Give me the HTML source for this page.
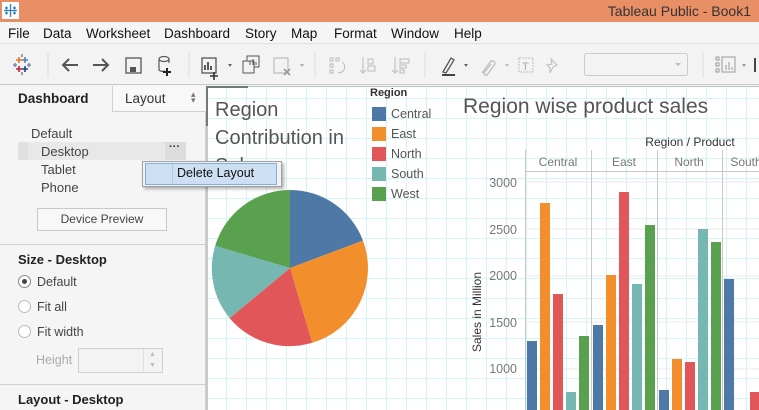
<!DOCTYPE html>
<html><head><meta charset="utf-8"><style>
*{margin:0;padding:0;box-sizing:border-box}
body{width:759px;height:410px;overflow:hidden;position:relative;font-family:"Liberation Sans",sans-serif;background:#f5f5f5;color:#333}
.a{position:absolute}
.t{position:absolute;white-space:nowrap}
</style></head><body>
<div class="a" style="left:0;top:0;width:759px;height:22px;background:#e98f66"></div>
<div class="a" style="left:2px;top:2px;width:17px;height:17px;background:#fff"></div>
<svg class="a" style="left:2px;top:2px" width="17" height="17" viewBox="0 0 17 17"><g stroke="#2e7fb8" stroke-width="1.3"><path d="M8.5 2v13M2 8.5h13M4.5 4.5v3M3 6h3M12.5 4.5v3M11 6h3M4.5 9.5v3M3 11h3M12.5 9.5v3M11 11h3"/></g></svg>
<div class="t" style="right:8px;top:3px;font-size:14px;color:#333">Tableau Public - Book1</div>
<div class="a" style="left:0;top:22px;width:759px;height:22px;background:#f5f5f5;border-bottom:1px solid #e0e0e0"></div>
<div class="t" style="top:26px;left:8px;font-size:13.5px;color:#111">File</div>
<div class="t" style="top:26px;left:43px;font-size:13.5px;color:#111">Data</div>
<div class="t" style="top:26px;left:86px;font-size:13.5px;color:#111">Worksheet</div>
<div class="t" style="top:26px;left:164px;font-size:13.5px;color:#111">Dashboard</div>
<div class="t" style="top:26px;left:245px;font-size:13.5px;color:#111">Story</div>
<div class="t" style="top:26px;left:291px;font-size:13.5px;color:#111">Map</div>
<div class="t" style="top:26px;left:334px;font-size:13.5px;color:#111">Format</div>
<div class="t" style="top:26px;left:391px;font-size:13.5px;color:#111">Window</div>
<div class="t" style="top:26px;left:454px;font-size:13.5px;color:#111">Help</div>
<div class="a" style="left:0;top:44px;width:759px;height:41px;background:#f3f3f3;border-bottom:1px solid #c8c8c8"></div>
<svg class="a" style="left:0;top:44px" width="759" height="41">
<g stroke-width="1.6">
<path d="M19 13v6M16 16h6" stroke="#e8762b"/><path d="M25 13v6M22 16h6" stroke="#5b87b0"/>
<path d="M19 22v6M16 25h6" stroke="#c72035"/><path d="M25 22v6M22 25h6" stroke="#1f447e"/>
<path d="M15 19v4M13 21h4M29 19v4M27 21h4M22 10v3M22 28v3" stroke="#7d8db0"/>
</g>
<g stroke="#ddd"><path d="M48 8v26M189 8v26M315 8v26M425 8v26M703 8v26"/></g>
<g stroke="#555" stroke-width="2" fill="none">
<path d="M78 21H63M69 15l-6 6 6 6"/><path d="M93 21h15M102 15l6 6-6 6"/>
</g>
<rect x="126" y="14" width="15" height="15" fill="none" stroke="#555" stroke-width="1.3"/><rect x="130" y="23" width="6" height="5" fill="#555"/>
<path d="M159 15v11a4 2 0 0 0 6 1M159 15a4 2 0 0 1 10 0v4M159 15a4 2 0 0 0 10 0" fill="none" stroke="#555" stroke-width="1.2"/>
<path d="M167 24v8M163 28h8" stroke="#222" stroke-width="2"/>
<rect x="202" y="14" width="14" height="15" fill="none" stroke="#555" stroke-width="1.3"/><path d="M205 26v-5M208 26v-8M211 26v-4M214 28v8M210 32h8" stroke="#333" stroke-width="1.6"/>
<path d="M228 20l2 3 2-3z" fill="#666"/>
<rect x="247" y="12" width="12" height="11" fill="none" stroke="#555"/><rect x="243" y="17" width="11" height="12" fill="#f3f3f3" stroke="#555"/><path d="M250 21v-4M253 21v-6M256 21v-3" stroke="#555"/>
<rect x="274" y="14" width="14" height="15" fill="none" stroke="#bbb" stroke-width="1.2"/><path d="M284 25l6 6M290 25l-6 6" stroke="#999" stroke-width="1.6"/><path d="M300 20l2 3 2-3z" fill="#aaa"/>
<g stroke="#bbb" fill="none"><rect x="330" y="14" width="3" height="3"/><rect x="336" y="14" width="3" height="3"/><rect x="330" y="20" width="3" height="3"/><rect x="330" y="26" width="3" height="3"/><path d="M342 18a6 6 0 0 1 0 10l-4 1"/>
<path d="M363 13v16M360 26l3 3 3-3M368 15h5v5h-5zM368 22h7v5h-7z"/>
<path d="M395 13v16M392 26l3 3 3-3M400 15h9v4h-9zM400 21h6v3h-6zM400 26h4v3h-4z"/></g>
<path d="M443 28l8-14 3 2-8 13z" fill="none" stroke="#555" stroke-width="1.3"/><rect x="442" y="30" width="13" height="2" fill="#444"/><path d="M464 20l2 3 2-3z" fill="#666"/>
<path d="M482 29l9-12a3 3 0 0 1 4 3l-8 11a2 2 0 0 1-3-2l7-9" fill="none" stroke="#bbb" stroke-width="1.2"/><path d="M505 20l2 3 2-3z" fill="#bbb"/>
<rect x="519" y="14" width="14" height="14" fill="none" stroke="#bbb" stroke-dasharray="2 1"/><text x="522" y="26" font-size="11" fill="#aaa" font-family="Liberation Sans">T</text>
<path d="M551 15l6 6-4 2-3 6 0-5-3-3 5-1z" fill="none" stroke="#bbb"/>
<rect x="584.5" y="9.5" width="103" height="22" rx="2" fill="#f3f3f3" stroke="#ccc"/><path d="M675 19l3 3 3-3z" fill="#bbb"/>
<g stroke="#999" fill="none"><rect x="716" y="13" width="3" height="3"/><rect x="716" y="19" width="3" height="3"/><rect x="716" y="25" width="3" height="3"/><rect x="722" y="13" width="13" height="15"/><path d="M726 26v-5M729 26v-8M732 26v-3"/></g><path d="M742 20l2 3 2-3z" fill="#999"/>
<path d="M755 14v14" stroke="#444" stroke-width="2"/>
</svg>
<div class="a" style="left:0;top:86px;width:206px;height:324px;background:#f5f5f5;border-right:1px solid #d0d0d0"></div>
<div class="t" style="left:18px;top:91px;font-size:13.5px;font-weight:bold;color:#222">Dashboard</div>
<div class="a" style="left:112px;top:86px;width:94px;height:26px;border-left:1px solid #d0d0d0;border-bottom:1px solid #d0d0d0;background:#f8f8f8"></div>
<div class="t" style="left:125px;top:91px;font-size:13.5px;color:#333">Layout</div>
<div class="t" style="left:191px;top:91px;font-size:9px;color:#777;line-height:6px">▴<br>▾</div>
<div class="t" style="left:31px;top:126px;font-size:13px;color:#444">Default</div>
<div class="a" style="left:18px;top:142px;width:168px;height:18px;background:#e8e8e8"></div>
<div class="a" style="left:18px;top:142px;width:10px;height:18px;background:#e0e0e0"></div>
<div class="a" style="left:165px;top:142px;width:21px;height:18px;background:#dcdcdc"></div>
<div class="t" style="left:169px;top:141px;font-size:11px;font-weight:bold;color:#333">···</div>
<div class="t" style="left:41px;top:144px;font-size:13px;color:#444">Desktop</div>
<div class="t" style="left:41px;top:162px;font-size:13px;color:#444">Tablet</div>
<div class="t" style="left:41px;top:180px;font-size:13px;color:#444">Phone</div>
<div class="a" style="left:37px;top:208px;width:130px;height:23px;border:1px solid #c8c8c8;background:#f8f8f8;font-size:12px;color:#444;text-align:center;line-height:21px">Device Preview</div>
<div class="a" style="left:0;top:244px;width:205px;height:1px;background:#d0d0d0"></div>
<div class="t" style="left:18px;top:252px;font-size:13px;font-weight:bold;color:#222">Size - Desktop</div>
<div class="a" style="left:18px;top:275px;width:13px;height:13px;border:1px solid #888;border-radius:50%;background:#fff"></div>
<div class="a" style="left:22px;top:279px;width:5px;height:5px;border-radius:50%;background:#444"></div>
<div class="a" style="left:18px;top:300px;width:13px;height:13px;border:1px solid #bbb;border-radius:50%;background:#fff"></div>
<div class="a" style="left:18px;top:325px;width:13px;height:13px;border:1px solid #bbb;border-radius:50%;background:#fff"></div>
<div class="t" style="left:37px;top:275px;font-size:12.5px;color:#444">Default</div>
<div class="t" style="left:37px;top:300px;font-size:12.5px;color:#444">Fit all</div>
<div class="t" style="left:37px;top:325px;font-size:12.5px;color:#444">Fit width</div>
<div class="t" style="left:36px;top:353px;font-size:12.5px;color:#aaa">Height</div>
<div class="a" style="left:78px;top:348px;width:85px;height:25px;border:1px solid #d0d0d0;background:#f3f3f3"></div>
<div class="a" style="left:143px;top:349px;width:1px;height:23px;background:#e0e0e0"></div>
<div class="t" style="left:149px;top:349px;font-size:7px;color:#bbb;line-height:11px">▲<br>▼</div>
<div class="a" style="left:0;top:384px;width:205px;height:1px;background:#d0d0d0"></div>
<div class="t" style="left:18px;top:392px;font-size:13px;font-weight:bold;color:#222">Layout - Desktop</div>
<div class="a" style="left:207px;top:86px;width:552px;height:324px;background-color:#fff;background-image:linear-gradient(90deg,#d3f5f8 1px,transparent 1px),linear-gradient(#d3f5f8 1px,transparent 1px);background-size:20px 20px;background-position:-1px 12px"></div>
<div class="a" style="left:206px;top:86px;width:2px;height:324px;background:#c8c8c8"></div>
<div class="a" style="left:206px;top:86px;width:2px;height:40px;background:#6f7a7a"></div>
<div class="a" style="left:206px;top:86px;width:42px;height:2px;background:#6f7a7a"></div>
<div class="a" style="left:248px;top:86px;width:511px;height:1px;background:#b7c4c4"></div>
<div class="t" style="left:215px;top:96px;font-size:20px;color:#555;line-height:28px">Region<br>Contribution in<br>Sales</div>
<div class="t" style="left:370px;top:87px;font-size:11px;font-weight:bold;color:#333">Region</div>
<div class="a" style="left:372px;top:107px;width:14px;height:14px;background:#4e79a7"></div>
<div class="a" style="left:372px;top:127px;width:14px;height:14px;background:#f28e2b"></div>
<div class="a" style="left:372px;top:147px;width:14px;height:14px;background:#e15759"></div>
<div class="a" style="left:372px;top:167px;width:14px;height:14px;background:#76b7b2"></div>
<div class="a" style="left:372px;top:187px;width:14px;height:14px;background:#59a14f"></div>
<div class="t" style="left:391px;top:107px;font-size:12.5px;color:#555">Central</div>
<div class="t" style="left:391px;top:127px;font-size:12.5px;color:#555">East</div>
<div class="t" style="left:391px;top:147px;font-size:12.5px;color:#555">North</div>
<div class="t" style="left:391px;top:167px;font-size:12.5px;color:#555">South</div>
<div class="t" style="left:391px;top:187px;font-size:12.5px;color:#555">West</div>
<svg class="a" style="left:0;top:0" width="759" height="410">
<path d="M290 268L290 190A78 78 0 0 1 363 240.6Z" fill="#4e79a7"/>
<path d="M290 268L363 240.6A78 78 0 0 1 312.2 342.8Z" fill="#f28e2b"/>
<path d="M290 268L312.2 342.8A78 78 0 0 1 229.6 318.1Z" fill="#e15759"/>
<path d="M290 268L229.6 318.1A78 78 0 0 1 215.2 245.8Z" fill="#76b7b2"/>
<path d="M290 268L215.2 245.8A78 78 0 0 1 290 190Z" fill="#59a14f"/>
<g stroke="#e8e8e8"><path d="M526 182h233M526 229h233M526 276h233M526 322h233M526 369h233"/></g>
<g stroke="#c8c8c8"><path d="M525.5 150v260M591.5 150v260M657.5 150v260M722.5 150v260M525 171.5h234"/></g>
<g>
<rect x="527" y="341" width="10" height="69" fill="#4e79a7"/><rect x="540" y="203" width="10" height="207" fill="#f28e2b"/><rect x="553" y="294" width="10" height="116" fill="#e15759"/><rect x="566" y="392" width="10" height="18" fill="#76b7b2"/><rect x="579" y="336" width="10" height="74" fill="#59a14f"/>
<rect x="593" y="325" width="10" height="85" fill="#4e79a7"/><rect x="606" y="275" width="10" height="135" fill="#f28e2b"/><rect x="619" y="192" width="10" height="218" fill="#e15759"/><rect x="632" y="284" width="10" height="126" fill="#76b7b2"/><rect x="645" y="225" width="10" height="185" fill="#59a14f"/>
<rect x="659" y="390" width="10" height="20" fill="#4e79a7"/><rect x="672" y="359" width="10" height="51" fill="#f28e2b"/><rect x="685" y="362" width="10" height="48" fill="#e15759"/><rect x="698" y="229" width="10" height="181" fill="#76b7b2"/><rect x="711" y="242" width="10" height="168" fill="#59a14f"/>
<rect x="724" y="279" width="10" height="131" fill="#4e79a7"/><rect x="750" y="392" width="10" height="18" fill="#e15759"/>
</g>
<g font-family="Liberation Sans" font-size="12.5" fill="#777" text-anchor="end">
<text x="517" y="187">3000</text><text x="517" y="234">2500</text><text x="517" y="280">2000</text><text x="517" y="327">1500</text><text x="517" y="373">1000</text>
</g>
<g font-family="Liberation Sans" font-size="12" fill="#777" text-anchor="middle">
<text x="558" y="166">Central</text><text x="624" y="166">East</text><text x="689" y="166">North</text><text x="746" y="166">South</text>
</g>
<text x="690" y="146" font-family="Liberation Sans" font-size="12" fill="#333" text-anchor="middle">Region / Product</text>
<text transform="translate(481,312) rotate(-90)" font-family="Liberation Sans" font-size="12" fill="#333" text-anchor="middle">Sales in Million</text>
</svg>
<div class="t" style="left:463px;top:95px;font-size:21px;color:#555">Region wise product sales</div>
<div class="a" style="left:142px;top:161px;width:140px;height:26px;background:#f2f2f2;border:1px solid #a0a0a0;box-shadow:2px 2px 3px rgba(0,0,0,.3)"></div>
<div class="a" style="left:145px;top:163px;width:132px;height:22px;background:#cde0f3;border:1px solid #84aee0"></div>
<div class="a" style="left:172px;top:164px;width:1px;height:20px;background:#b0c8e0"></div>
<div class="t" style="left:177px;top:166px;font-size:12.5px;color:#111">Delete Layout</div>
</body></html>
